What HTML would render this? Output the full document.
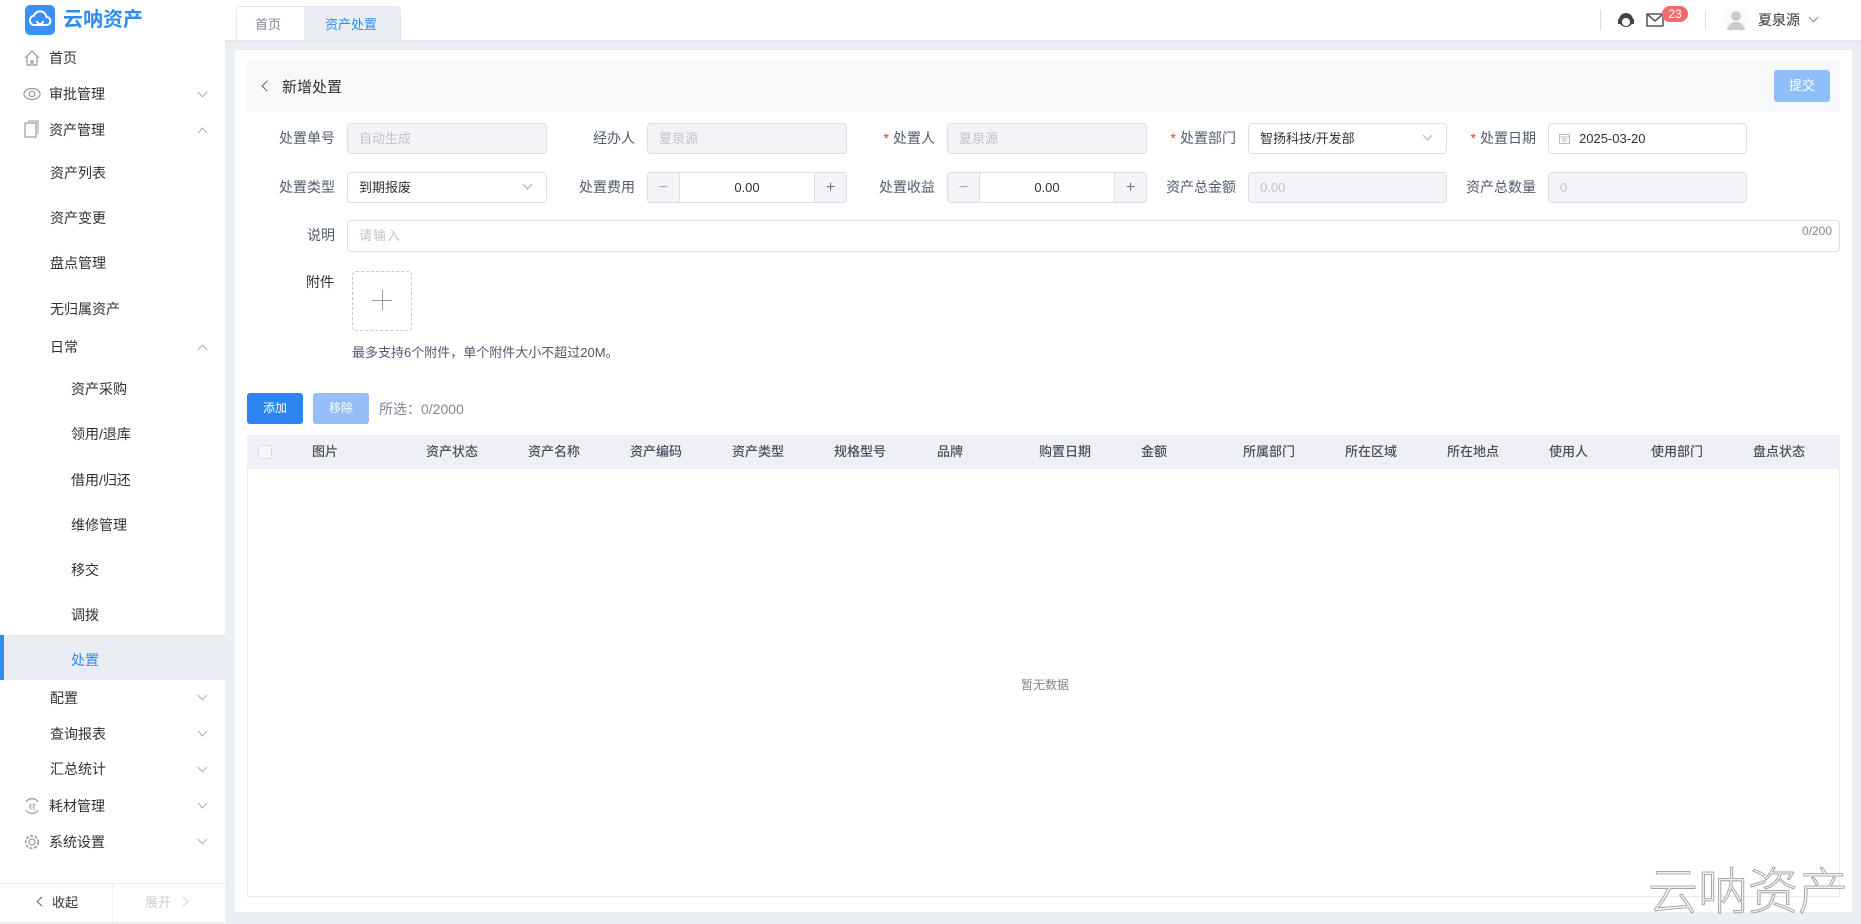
<!DOCTYPE html>
<html><head><meta charset="utf-8">
<style>
*{margin:0;padding:0;box-sizing:border-box}
body{width:1861px;height:922px;overflow:hidden;background:#ebeef3;font-family:"Liberation Sans","Noto Sans CJK SC",sans-serif;font-size:14px;color:#515a6e;position:relative}
.a{position:absolute}
.hdr{left:0;top:0;width:1861px;height:40px;background:#fff;box-shadow:0 1px 3px rgba(0,0,0,.06)}
.side{left:0;top:40px;width:225px;height:882px;background:#fff}
.mi{position:absolute;font-size:14px;color:#303133;white-space:nowrap;line-height:20px}
.chev{position:absolute;left:199px;width:7px;height:7px;border-right:1px solid #aaa;border-bottom:1px solid #aaa}
.card{left:235px;top:50px;width:1617px;height:862px;background:#fff}
.lbl{position:absolute;font-size:14px;color:#515a6e;text-align:right;line-height:31px;height:31px}
.inp{position:absolute;height:31px;border:1px solid #dcdee2;border-radius:4px;background:#fff;font-size:13px;line-height:29px;padding-left:11px;color:#515a6e}
.dis{background:#f3f4f7;color:#c0c4cc}
.req{color:#ed4014;margin-right:4px}
.th{position:absolute;top:438px;height:34px;line-height:34px;font-size:13px;color:#4a4f5c;font-weight:500}
</style></head><body>
<div class="a hdr"></div>
<div class="a" style="left:25px;top:5px;width:30px;height:30px;background:#3b8ff5;border-radius:5px">
<svg width="30" height="30" viewBox="0 0 30 30"><path d="M8 20a5 5 0 0 1 1-9.5a6.5 6.5 0 0 1 12.5 1.5a4 4 0 0 1 0 8z" fill="none" stroke="#fff" stroke-width="2"/><path d="M12 16a3 3 0 1 0 6 0" fill="none" stroke="#fff" stroke-width="2"/></svg></div>
<div class="a" style="left:63px;top:6px;font-size:20px;font-weight:bold;color:#2d8cf0;line-height:28px">云呐资产</div>
<div class="a" style="left:236px;top:6px;width:165px;height:34px;border:1px solid #e4e7ed;border-bottom:none;border-radius:4px 4px 0 0"></div>
<div class="a" style="left:304px;top:7px;width:96px;height:33px;background:#ebeef3"></div>
<div class="a" style="left:255px;top:14px;font-size:13px;color:#808695">首页</div>
<div class="a" style="left:325px;top:14px;font-size:13px;color:#2d8cf0">资产处置</div>
<div class="a" style="left:1600px;top:10px;width:1px;height:20px;background:#ddd"></div>
<svg class="a" style="left:1617px;top:11px" width="18" height="18" viewBox="0 0 18 18"><circle cx="9" cy="9" r="7" fill="#444"/><circle cx="9" cy="11" r="4" fill="#fff"/><rect x="1" y="8" width="3" height="5" fill="#444"/><rect x="14" y="8" width="3" height="5" fill="#444"/></svg>
<svg class="a" style="left:1646px;top:13px" width="18" height="14" viewBox="0 0 18 14"><rect x="1" y="1" width="16" height="12" fill="none" stroke="#555" stroke-width="1.5"/><path d="M1 1l8 7l8-7" fill="none" stroke="#555" stroke-width="1.5"/></svg>
<div class="a" style="left:1662px;top:6px;width:26px;height:16px;background:#f26b6b;border-radius:8px;color:#fff;font-size:12px;text-align:center;line-height:16px">23</div>
<div class="a" style="left:1705px;top:10px;width:1px;height:20px;background:#ddd"></div>
<svg class="a" style="left:1723px;top:7px" width="26" height="26" viewBox="0 0 26 26"><circle cx="13" cy="13" r="12.5" fill="#fafafa"/><circle cx="13" cy="9" r="5" fill="#ccc"/><path d="M4 23c1-6 5-8 9-8s8 2 9 8z" fill="#ccc"/></svg>
<div class="a" style="left:1758px;top:10px;font-size:14px;color:#303133">夏泉源</div>
<div class="a" style="left:1810px;top:14px;width:7px;height:7px;border-right:1px solid #888;border-bottom:1px solid #888;transform:rotate(45deg)"></div>

<div class="a side"></div>
<svg class="a" style="left:24px;top:50px" width="16" height="16" viewBox="0 0 16 16"><path d="M1 8L8 1l7 7M3 6v9h4v-4h2v4h4V6" fill="none" stroke="#999" stroke-width="1.2"/></svg>
<div class="mi" style="left:49px;top:48px">首页</div>
<svg class="a" style="left:23px;top:87px" width="18" height="14" viewBox="0 0 18 14"><ellipse cx="9" cy="7" rx="8" ry="5.5" fill="none" stroke="#999" stroke-width="1.2"/><circle cx="9" cy="7" r="2.8" fill="none" stroke="#999" stroke-width="1.2"/></svg>
<div class="mi" style="left:49px;top:84px">审批管理</div><div class="chev" style="top:89px;transform:rotate(45deg)"></div>
<svg class="a" style="left:24px;top:120px" width="16" height="18" viewBox="0 0 16 18"><rect x="1" y="3" width="11" height="14" fill="none" stroke="#999" stroke-width="1.2"/><path d="M4 1h10v13" fill="none" stroke="#999"/></svg>
<div class="mi" style="left:49px;top:120px">资产管理</div><div class="chev" style="top:129px;transform:rotate(-135deg)"></div>
<div class="mi" style="left:50px;top:163px">资产列表</div>
<div class="mi" style="left:50px;top:208px">资产变更</div>
<div class="mi" style="left:50px;top:253px">盘点管理</div>
<div class="mi" style="left:50px;top:299px">无归属资产</div>
<div class="mi" style="left:50px;top:337px">日常</div><div class="chev" style="top:346px;transform:rotate(-135deg)"></div>
<div class="mi" style="left:71px;top:379px">资产采购</div>
<div class="mi" style="left:71px;top:424px">领用/退库</div>
<div class="mi" style="left:71px;top:470px">借用/归还</div>
<div class="mi" style="left:71px;top:515px">维修管理</div>
<div class="mi" style="left:71px;top:560px">移交</div>
<div class="mi" style="left:71px;top:605px">调拨</div>
<div class="a" style="left:0;top:635px;width:225px;height:45px;background:#e9ecf1"></div>
<div class="a" style="left:0;top:635px;width:4px;height:45px;background:#2d8cf0"></div>
<div class="mi" style="left:71px;top:650px;color:#2d8cf0">处置</div>
<div class="mi" style="left:50px;top:688px">配置</div><div class="chev" style="top:692px;transform:rotate(45deg)"></div>
<div class="mi" style="left:50px;top:724px">查询报表</div><div class="chev" style="top:728px;transform:rotate(45deg)"></div>
<div class="mi" style="left:50px;top:759px">汇总统计</div><div class="chev" style="top:764px;transform:rotate(45deg)"></div>
<svg class="a" style="left:23px;top:798px" width="18" height="16" viewBox="0 0 18 16"><path d="M3 4a7 7 0 0 1 12 0M15 12a7 7 0 0 1-12 0" fill="none" stroke="#999" stroke-width="1.2"/><text x="9" y="11" font-size="7" text-anchor="middle" fill="#999" font-family="Noto Sans CJK SC">材</text></svg>
<div class="mi" style="left:49px;top:796px">耗材管理</div><div class="chev" style="top:800px;transform:rotate(45deg)"></div>
<svg class="a" style="left:24px;top:834px" width="16" height="16" viewBox="0 0 16 16"><circle cx="8" cy="8" r="6.3" fill="none" stroke="#999" stroke-width="1.6" stroke-dasharray="3 1.6"/><circle cx="8" cy="8" r="3" fill="none" stroke="#999" stroke-width="1.2"/></svg>
<div class="mi" style="left:49px;top:832px">系统设置</div><div class="chev" style="top:836px;transform:rotate(45deg)"></div>
<div class="a" style="left:0;top:883px;width:225px;height:1px;background:#eef0f4"></div>
<div class="a" style="left:112px;top:883px;width:1px;height:39px;background:#eef0f4"></div>
<div class="a" style="left:38px;top:898px;width:7px;height:7px;border-left:1px solid #666;border-bottom:1px solid #666;transform:rotate(45deg)"></div>
<div class="mi" style="left:52px;top:893px;font-size:13px">收起</div>
<div class="mi" style="left:145px;top:893px;font-size:13px;color:#ccc">展开</div>
<div class="a" style="left:180px;top:898px;width:7px;height:7px;border-right:1px solid #ccc;border-top:1px solid #ccc;transform:rotate(45deg)"></div>

<div class="a card"></div>
<div class="a" style="left:247px;top:60px;width:1593px;height:52px;background:#f7f8fa"></div>
<div class="a" style="left:263px;top:82px;width:8px;height:8px;border-left:1.3px solid #666;border-bottom:1.3px solid #666;transform:rotate(45deg)"></div>
<div class="a" style="left:282px;top:76px;font-size:15px;color:#303133">新增处置</div>
<div class="a" style="left:1774px;top:70px;width:56px;height:32px;background:#90bef9;border-radius:3px;color:#fff;font-size:13px;text-align:center;line-height:32px">提交</div>

<div class="lbl" style="left:235px;top:123px;width:100px">处置单号</div>
<div class="inp dis" style="left:347px;top:123px;width:200px">自动生成</div>
<div class="lbl" style="left:535px;top:123px;width:100px">经办人</div>
<div class="inp dis" style="left:647px;top:123px;width:200px">夏泉源</div>
<div class="lbl" style="left:835px;top:123px;width:100px"><span class="req">*</span>处置人</div>
<div class="inp dis" style="left:947px;top:123px;width:200px">夏泉源</div>
<div class="lbl" style="left:1136px;top:123px;width:100px"><span class="req">*</span>处置部门</div>
<div class="inp" style="left:1248px;top:123px;width:199px;color:#303133">智扬科技/开发部</div>
<div class="a" style="left:1424px;top:132px;width:7px;height:7px;border-right:1px solid #aaa;border-bottom:1px solid #aaa;transform:rotate(45deg)"></div>
<div class="lbl" style="left:1436px;top:123px;width:100px"><span class="req">*</span>处置日期</div>
<div class="inp" style="left:1548px;top:123px;width:199px;padding-left:30px;color:#303133">2025-03-20</div>
<svg class="a" style="left:1559px;top:133px" width="11" height="11" viewBox="0 0 11 11"><rect x=".5" y="1.5" width="10" height="9" fill="none" stroke="#bbb"/><path d="M.5 4h10M3 6h5M3 8h5" stroke="#bbb"/></svg>

<div class="lbl" style="left:235px;top:172px;width:100px">处置类型</div>
<div class="inp" style="left:347px;top:172px;width:200px;color:#303133">到期报废</div>
<div class="a" style="left:524px;top:181px;width:7px;height:7px;border-right:1px solid #aaa;border-bottom:1px solid #aaa;transform:rotate(45deg)"></div>
<div class="lbl" style="left:535px;top:172px;width:100px">处置费用</div>
<div class="inp" style="left:647px;top:172px;width:200px;padding:0;text-align:center;color:#303133">0.00</div>
<div class="a" style="left:647px;top:172px;width:33px;height:31px;background:#f3f4f7;border:1px solid #dcdee2;border-radius:4px 0 0 4px;text-align:center;line-height:29px;color:#aaa;font-size:16px">−</div>
<div class="a" style="left:814px;top:172px;width:33px;height:31px;background:#f3f4f7;border:1px solid #dcdee2;border-radius:0 4px 4px 0;text-align:center;line-height:29px;color:#777;font-size:16px">+</div>
<div class="lbl" style="left:835px;top:172px;width:100px">处置收益</div>
<div class="inp" style="left:947px;top:172px;width:200px;padding:0;text-align:center;color:#303133">0.00</div>
<div class="a" style="left:947px;top:172px;width:33px;height:31px;background:#f3f4f7;border:1px solid #dcdee2;border-radius:4px 0 0 4px;text-align:center;line-height:29px;color:#aaa;font-size:16px">−</div>
<div class="a" style="left:1114px;top:172px;width:33px;height:31px;background:#f3f4f7;border:1px solid #dcdee2;border-radius:0 4px 4px 0;text-align:center;line-height:29px;color:#777;font-size:16px">+</div>
<div class="lbl" style="left:1136px;top:172px;width:100px">资产总金额</div>
<div class="inp dis" style="left:1248px;top:172px;width:199px">0.00</div>
<div class="lbl" style="left:1436px;top:172px;width:100px">资产总数量</div>
<div class="inp dis" style="left:1548px;top:172px;width:199px">0</div>

<div class="lbl" style="left:235px;top:220px;width:100px">说明</div>
<div class="inp" style="left:347px;top:220px;width:1493px;height:32px;color:#c0c4cc;letter-spacing:1px">请输入</div>
<div class="a" style="left:1802px;top:224px;font-size:12px;color:#808695">0/200</div>

<div class="a" style="left:306px;top:272px;font-size:14px;color:#303133">附件</div>
<div class="a" style="left:352px;top:271px;width:60px;height:60px;border:1px dashed #c5c8ce;border-radius:4px"></div>
<div class="a" style="left:372px;top:300px;width:20px;height:1px;background:#999"></div>
<div class="a" style="left:382px;top:290px;width:1px;height:20px;background:#999"></div>
<div class="a" style="left:352px;top:342px;font-size:13px;color:#515a6e">最多支持6个附件，单个附件大小不超过20M。</div>

<div class="a" style="left:247px;top:393px;width:56px;height:31px;background:#2d84f0;border-radius:3px;color:#fff;font-size:12px;text-align:center;line-height:31px">添加</div>
<div class="a" style="left:313px;top:393px;width:56px;height:31px;background:#94bff8;border-radius:3px;color:#fff;font-size:12px;text-align:center;line-height:31px">移除</div>
<div class="a" style="left:379px;top:399px;font-size:14px;color:#808695">所选：0/2000</div>

<div class="a" style="left:247px;top:435px;width:1593px;height:462px;border:1px solid #e8eaec"></div>
<div class="a" style="left:247px;top:435px;width:1593px;height:34px;background:#eef0f5"></div>
<div class="a" style="left:258px;top:445px;width:14px;height:14px;border:1px solid #dcdee2;border-radius:2px;background:#f5f6fa"></div>
<div class="th" style="left:312px;top:435px">图片</div>
<div class="th" style="left:426px;top:435px">资产状态</div>
<div class="th" style="left:528px;top:435px">资产名称</div>
<div class="th" style="left:630px;top:435px">资产编码</div>
<div class="th" style="left:732px;top:435px">资产类型</div>
<div class="th" style="left:834px;top:435px">规格型号</div>
<div class="th" style="left:937px;top:435px">品牌</div>
<div class="th" style="left:1039px;top:435px">购置日期</div>
<div class="th" style="left:1141px;top:435px">金额</div>
<div class="th" style="left:1243px;top:435px">所属部门</div>
<div class="th" style="left:1345px;top:435px">所在区域</div>
<div class="th" style="left:1447px;top:435px">所在地点</div>
<div class="th" style="left:1549px;top:435px">使用人</div>
<div class="th" style="left:1651px;top:435px">使用部门</div>
<div class="th" style="left:1753px;top:435px">盘点状态</div>
<div class="a" style="left:1021px;top:676px;font-size:12px;color:#808695">暂无数据</div>

<div class="a" style="left:1648px;top:858px;font-size:50px;color:#f2f2f2;line-height:60px;-webkit-text-stroke:0.8px #999;font-family:'Noto Sans CJK SC',sans-serif;font-weight:300">云呐资产</div>
</body></html>
